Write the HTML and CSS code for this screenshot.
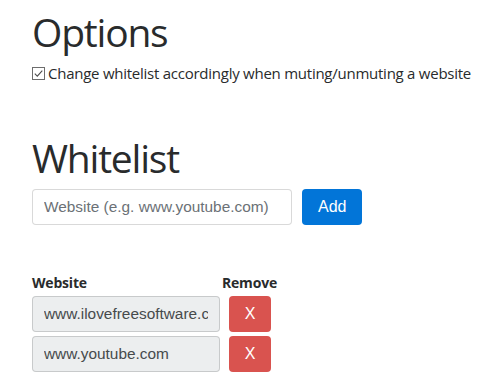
FILE: index.html
```html
<!DOCTYPE html>
<html lang="en">
<head>
    <meta charset="UTF-8">
    <title>Options</title>
    <link rel="stylesheet" href="styles.css">
</head>
<body>
    <h1>Options</h1>
    <label class="option">
        <svg class="check" width="13" height="13" viewBox="0 0 13 13">
            <rect x="0.5" y="0.5" width="12" height="12" fill="#fff" stroke="#6d6d6d"/>
            <path d="M2.8 6.6 L5.3 9.1 L10.3 3.6" fill="none" stroke="#4d4d4d" stroke-width="1.1"/>
        </svg>
        Change whitelist accordingly when muting/unmuting a website
    </label>

    <h1 class="whitelist-title">Whitelist</h1>
    <form class="add-form">
        <input type="text" class="form-control site-input" placeholder="Website (e.g. www.youtube.com)">
        <button type="button" class="btn btn-primary">Add</button>
    </form>

    <table class="sites">
        <thead>
            <tr>
                <th class="col-site">Website</th>
                <th class="col-remove">Remove</th>
            </tr>
        </thead>
        <tbody>
            <tr>
                <td class="col-site"><input type="text" class="form-control" value="www.ilovefreesoftware.com" readonly></td>
                <td class="col-remove"><button type="button" class="btn btn-danger">X</button></td>
            </tr>
            <tr>
                <td class="col-site"><input type="text" class="form-control" value="www.youtube.com" readonly></td>
                <td class="col-remove"><button type="button" class="btn btn-danger">X</button></td>
            </tr>
        </tbody>
    </table>
</body>
</html>
```

FILE: styles.css
```css
body {
    margin: 0;
    padding: 10px 32px;
    font-family: "Open Sans", "Noto Sans", sans-serif;
    color: #292b2c;
    background: #fff;
}
h1 {
    font-size: 39px;
    font-weight: 400;
    letter-spacing: -1.2px;
    line-height: 44px;
    margin: 0 0 9px;
}
.option {
    display: flex;
    align-items: center;
    gap: 3px;
    font-size: 15px;
    letter-spacing: -0.25px;
    line-height: 20px;
    white-space: nowrap;
}
.check {
    flex: none;
}
.whitelist-title {
    margin-top: 53px;
}
.add-form {
    display: flex;
    gap: 10px;
}
.form-control {
    box-sizing: border-box;
    height: 36px;
    padding: 6px 11px;
    font-family: "Liberation Sans", Arial, sans-serif;
    font-size: 15.4px;
    color: #464a4c;
    background: #fff;
    border: 1px solid rgba(0,0,0,0.15);
    border-radius: 4px;
}
.form-control::placeholder {
    color: #6b7176;
}
.form-control[readonly] {
    background: #eceeef;
}
.site-input {
    width: 260px;
}
.btn {
    box-sizing: border-box;
    height: 36px;
    padding: 6px 16px;
    font-family: "Liberation Sans", Arial, sans-serif;
    font-size: 16px;
    color: #fff;
    border: none;
    border-radius: 4px;
}
.btn-primary {
    width: 60px;
    background: #0275d8;
}
.btn-danger {
    background: #d9534f;
    width: 42px;
    padding: 0;
}
.sites {
    margin-top: 48px;
    border-collapse: collapse;
}
.sites th {
    text-align: left;
    font-size: 14px;
    font-weight: 700;
    letter-spacing: -0.2px;
    line-height: 20px;
    padding: 0 0 3px;
}
.sites td {
    padding: 0 0 4px;
}
.sites .col-site input {
    width: 188px;
}
.sites th.col-remove {
    padding-left: 2px;
}
.sites td.col-remove {
    padding-left: 9px;
}
```
